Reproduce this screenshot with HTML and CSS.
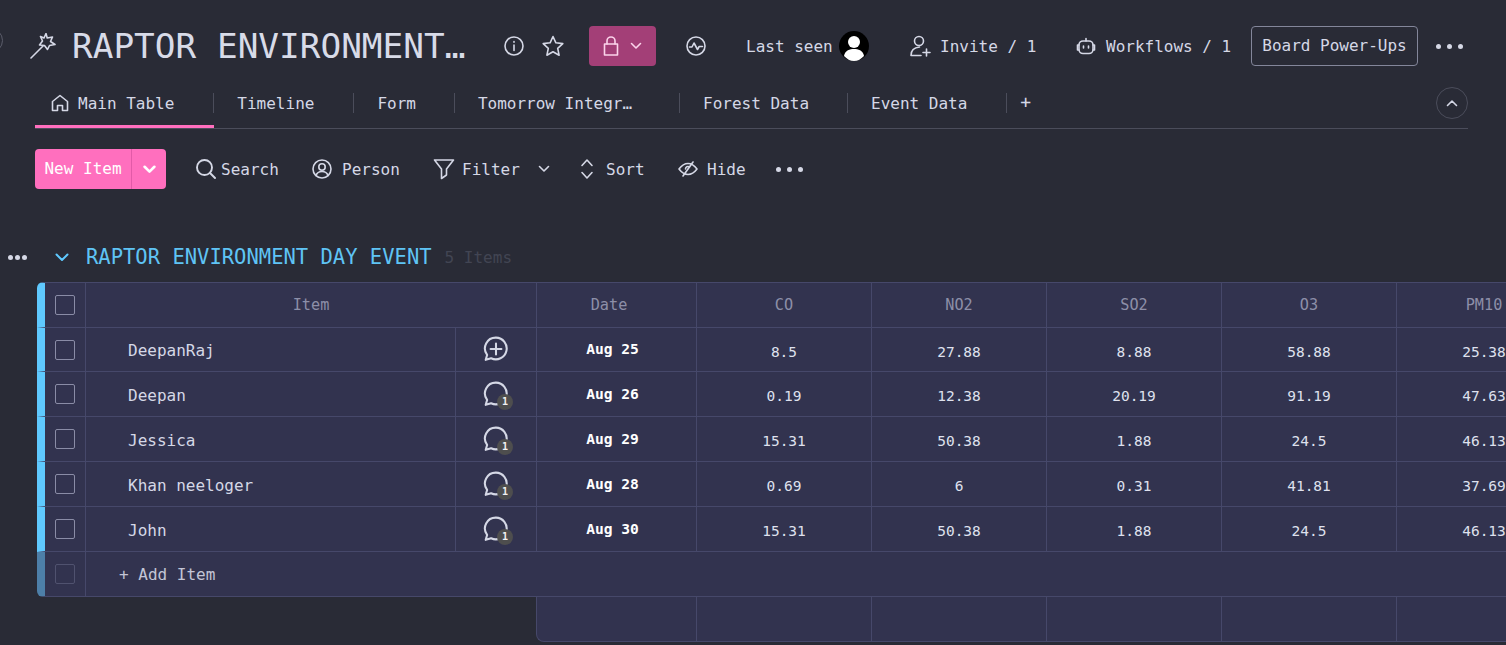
FILE: index.html
```html
<!DOCTYPE html>
<html lang="en">
<head>
<meta charset="utf-8">
<title>RAPTOR ENVIRONMENT DAY EVENT</title>
<link rel="stylesheet" href="styles.css">
</head>
<body>
<div class="edge-circle"></div>
<header class="topbar">
  <svg class="ic wand" viewBox="0 0 26 26"><path d="M1 25 13 13"/><path d="M16 1.500 17.200 6 22.500 5 20.500 9.500 25 12.500 19.500 13.500 17.500 17.500 14.500 13.500 9.500 13 12.500 9 10.500 4.500 14 6z" transform="translate(0 -1)"/></svg>
  <h1 class="title">RAPTOR ENVIRONMENT…</h1>
  <svg class="ic i20 info" viewBox="0 0 20 20"><circle cx="10" cy="10" r="9"/><path d="M10 9v5.500M10 5.500v.8"/></svg>
  <svg class="ic i22 star" viewBox="0 0 22 22"><path d="M11 1.500 13.900 7.800 20.800 8.600 15.700 13.300 17.100 20.200 11 16.700 4.900 20.200 6.300 13.300 1.200 8.600 8.100 7.800z"/></svg>
  <button class="lock">
    <svg class="ic lock-ic" viewBox="0 0 16 20"><rect x="1.500" y="8" width="13" height="11"/><path d="M4 8V5a4 4 0 0 1 8 0v3"/></svg>
    <svg class="ic chev12" viewBox="0 0 12 8"><path d="M1.500 1.500 6 6l4.500-4.500"/></svg>
  </button>
  <svg class="ic i20 pulse" viewBox="0 0 20 20"><circle cx="10" cy="10" r="9"/><path d="M3.500 11h2.500l2-4 3.500 6.500 1.700-3h3.300"/></svg>
  <span class="last-seen">Last seen</span>
  <svg class="avatar" viewBox="0 0 30 30"><circle cx="15" cy="15" r="15" fill="#000"/><circle cx="15" cy="11" r="6" fill="#fff"/><path d="M5 25c1-6 6-7 10-7s9 1 10 7c-3 3-6 5-10 5s-7-2-10-5z" fill="#fff"/></svg>
  <svg class="ic invite-ic" viewBox="0 0 22 22"><circle cx="10" cy="6" r="4.500"/><path d="M2 20.500c0-5 3-8 8.500-8.500M2 20.500h10M14 17.500h7M17.500 14v7"/></svg>
  <span class="invite">Invite / 1</span>
  <svg class="ic robot-ic" viewBox="0 0 20 18"><rect x="3" y="4" width="14" height="12.500" rx="4"/><path d="M3 8H1.500v5H3M17 8h1.500v5H17M10 4V1.500M7.500 9v2M12.500 9v2"/></svg>
  <span class="workflows">Workflows / 1</span>
  <button class="powerups">Board Power-Ups</button>
  <span class="dots top-dots"><i></i><i></i><i></i></span>
</header>

<nav class="tabs">
  <a class="tab tab-main"><svg class="ic home" viewBox="0 0 18 18"><path d="M1.500 7.500 9 1.500l7.500 6v9h-5v-5h-5v5h-5z"/></svg>Main Table</a>
  <a class="tab">Timeline</a>
  <a class="tab tab-tight">Form</a>
  <a class="tab tab-long">Tomorrow Integr…</a>
  <a class="tab tab-tight">Forest Data</a>
  <a class="tab">Event Data</a>
  <span class="tab-add">+</span>
  <span class="collapse"><svg class="ic chev12" viewBox="0 0 12 8"><path d="M1.500 6.500 6 2l4.500 4.500"/></svg></span>
</nav>

<section class="toolbar">
  <div class="new-item"><span class="new-label">New Item</span><span class="new-arrow"><svg viewBox="0 0 12 8"><path d="M1.500 1.500 6 6l4.500-4.500"/></svg></span></div>
  <svg class="ic search-ic" viewBox="0 0 20 20"><circle cx="8.500" cy="8.500" r="7.500"/><path d="M14 14l5 5"/></svg>
  <span class="tool search-t">Search</span>
  <svg class="ic person-ic" viewBox="0 0 20 20"><circle cx="10" cy="10" r="9"/><circle cx="10" cy="8" r="3.200"/><path d="M4 16.500c1-3 3.500-4 6-4s5 1 6 4"/></svg>
  <span class="tool person-t">Person</span>
  <svg class="ic filter-ic" viewBox="0 0 22 22"><path d="M1.500 2h19l-7 9v6l-5 3.500V11z"/></svg>
  <span class="tool filter-t">Filter</span>
  <svg class="ic chev12 filter-chev" viewBox="0 0 12 8"><path d="M1.500 1.500 6 6l4.500-4.500"/></svg>
  <svg class="ic sort-ic" viewBox="0 0 14 22"><path d="M2 7.500 7 2l5 5.500M2 14.500 7 20l5-5.500"/></svg>
  <span class="tool sort-t">Sort</span>
  <svg class="ic hide-ic" viewBox="0 0 20 16"><path d="M1 8c3-4 6-5.500 9-5.500S16 4 19 8c-3 4-6 5.500-9 5.500S4 12 1 8z"/><path d="M15 1 5 15"/><path d="M7.500 8a2.500 2.500 0 0 1 4-2"/></svg>
  <span class="tool hide-t">Hide</span>
  <span class="dots tool-dots"><i></i><i></i><i></i></span>
</section>

<section class="group-head">
  <span class="dots group-dots"><i></i><i></i><i></i></span>
  <svg class="ic group-chev" viewBox="0 0 14 9"><path d="M1.500 1.500 7 7l5.500-5.500"/></svg>
  <h2 class="group-title">RAPTOR ENVIRONMENT DAY EVENT</h2>
  <span class="group-count">5 Items</span>
</section>

<section class="board">
  <div class="row head">
    <div class="c chk"><span class="box"></span></div>
    <div class="c item-head">Item</div>
    <div class="c date-head">Date</div><div class="c">CO</div><div class="c">NO2</div><div class="c">SO2</div><div class="c">O3</div><div class="c">PM10</div>
  </div>
  <div class="row row-first">
    <div class="c chk"><span class="box"></span></div>
    <div class="c name">DeepanRaj</div>
    <div class="c cmt"><svg class="ic bubble bubble-add" viewBox="0 0 24 24"><path d="M12 1.500a10 10 0 1 1-4.500 19l-5 1.500 1.300-4.500A10 10 0 0 1 12 1.500z"/><path d="M12 7v10M7 12h10"/></svg></div>
    <div class="c date">Aug 25</div><div class="c val">8.5</div><div class="c val">27.88</div><div class="c val">8.88</div><div class="c val">58.88</div><div class="c val">25.38</div>
  </div>
  <div class="row">
    <div class="c chk"><span class="box"></span></div>
    <div class="c name">Deepan</div>
    <div class="c cmt"><span class="bubble-wrap"><svg class="ic bubble" viewBox="0 0 24 24"><path d="M12 1.500a10 10 0 1 1-4.500 19l-5 1.500 1.300-4.500A10 10 0 0 1 12 1.500z"/></svg><b class="badge">1</b></span></div>
    <div class="c date">Aug 26</div><div class="c val">0.19</div><div class="c val">12.38</div><div class="c val">20.19</div><div class="c val">91.19</div><div class="c val">47.63</div>
  </div>
  <div class="row">
    <div class="c chk"><span class="box"></span></div>
    <div class="c name">Jessica</div>
    <div class="c cmt"><span class="bubble-wrap"><svg class="ic bubble" viewBox="0 0 24 24"><path d="M12 1.500a10 10 0 1 1-4.500 19l-5 1.500 1.300-4.500A10 10 0 0 1 12 1.500z"/></svg><b class="badge">1</b></span></div>
    <div class="c date">Aug 29</div><div class="c val">15.31</div><div class="c val">50.38</div><div class="c val">1.88</div><div class="c val">24.5</div><div class="c val">46.13</div>
  </div>
  <div class="row">
    <div class="c chk"><span class="box"></span></div>
    <div class="c name">Khan neeloger</div>
    <div class="c cmt"><span class="bubble-wrap"><svg class="ic bubble" viewBox="0 0 24 24"><path d="M12 1.500a10 10 0 1 1-4.500 19l-5 1.500 1.300-4.500A10 10 0 0 1 12 1.500z"/></svg><b class="badge">1</b></span></div>
    <div class="c date">Aug 28</div><div class="c val">0.69</div><div class="c val">6</div><div class="c val">0.31</div><div class="c val">41.81</div><div class="c val">37.69</div>
  </div>
  <div class="row">
    <div class="c chk"><span class="box"></span></div>
    <div class="c name">John</div>
    <div class="c cmt"><span class="bubble-wrap"><svg class="ic bubble" viewBox="0 0 24 24"><path d="M12 1.500a10 10 0 1 1-4.500 19l-5 1.500 1.300-4.500A10 10 0 0 1 12 1.500z"/></svg><b class="badge">1</b></span></div>
    <div class="c date">Aug 30</div><div class="c val">15.31</div><div class="c val">50.38</div><div class="c val">1.88</div><div class="c val">24.5</div><div class="c val">46.13</div>
  </div>
  <div class="row add">
    <div class="c chk"><span class="box box-dim"></span></div>
    <div class="c add-label">+ Add Item</div>
  </div>
  <div class="summary">
    <div class="c"></div><div class="c"></div><div class="c"></div><div class="c"></div><div class="c"></div><div class="c"></div>
  </div>
</section>
</body>
</html>
```

FILE: styles.css
```css
* { box-sizing: border-box; }
html, body { height: 100%; }
body {
  margin: 0;
  width: 1506px;
  height: 645px;
  overflow: hidden;
  position: relative;
  background: #292b36;
  color: #d5d8e6;
  font-family: "DejaVu Sans Mono", "Liberation Mono", monospace;
  font-size: 16px;
}
button { font: inherit; color: inherit; }
.ic { fill: none; stroke: #d5d8e6; stroke-width: 1.6; stroke-linecap: round; stroke-linejoin: round; flex: none; display: block; }
.i20 { width: 20px; height: 20px; }
.i22 { width: 22px; height: 22px; }
.chev12 { width: 12px; height: 8px; }

.edge-circle { position: absolute; left: -22px; top: 28px; width: 25px; height: 25px; border-radius: 50%; border: 1px solid #5b5d6b; }

/* top bar */
.topbar { display: flex; align-items: center; height: 40px; margin-top: 26px; padding-left: 30px; }
.wand { width: 26px; height: 26px; }
.title { margin: 0 0 0 16px; width: 432px; font-size: 34.400px; font-weight: 400; white-space: nowrap; overflow: hidden; line-height: 40px; color: #d8dbe8; }
.star { margin-left: 18px; }
.lock { margin-left: 25px; width: 67px; height: 40px; border: 0; border-radius: 4px; background: #a33f77; display: flex; align-items: center; justify-content: center; gap: 11px; padding: 0; }
.lock-ic { width: 16px; height: 20px; stroke: #fbd3ea; }
.lock .chev12 { stroke: #fbd3ea; }
.pulse { margin-left: 30px; }
.last-seen { margin-left: 40px; width: 93px; white-space: nowrap; }
.avatar { width: 30px; height: 30px; display: block; flex: none; }
.invite-ic { width: 22px; height: 22px; margin-left: 40px; }
.invite { margin-left: 9px; width: 136px; white-space: nowrap; }
.robot-ic { width: 20px; height: 18px; }
.workflows { margin-left: 10px; width: 145px; white-space: nowrap; }
.powerups { width: 167px; height: 40px; padding: 0 0 2px; background: transparent; border: 1px solid #83869a; border-radius: 4px; white-space: nowrap; }
.dots { display: inline-flex; gap: 6px; align-items: center; flex: none; }
.dots i { display: block; width: 5px; height: 5px; border-radius: 50%; background: #d5d8e6; }
.top-dots { margin-left: 18px; }

/* tabs */
.tabs { display: flex; align-items: center; height: 49px; margin: 14px 0 0 35px; padding-bottom: 2px; width: 1433px; border-bottom: 1px solid #4b4d5b; }
.tab { display: flex; align-items: center; height: 20px; padding: 0 39px 0 23px; white-space: nowrap; border-right: 1px solid #4b4d5b; }
.tab-main { position: relative; padding: 0 39px 0 16px; gap: 9px; }
.tab-main::after { content: ""; position: absolute; left: 0; right: -1px; bottom: -15px; height: 3px; background: #ff6fbe; }
.tab-tight { padding-right: 38px; }
.tab-long { padding-right: 47px; }
.home { width: 18px; height: 18px; }
.tab-add { margin-left: 13px; font-size: 18px; line-height: 18px; margin-top: -2px; }
.collapse { margin-left: auto; width: 32px; height: 32px; border: 1px solid #4b4d5b; border-radius: 50%; display: flex; align-items: center; justify-content: center; }

/* toolbar */
.toolbar { display: flex; align-items: center; height: 40px; margin: 20px 0 0 35px; }
.new-item { display: flex; width: 131px; height: 40px; background: #ff6fbe; border-radius: 4px; color: #fff; }
.new-label { width: 97px; line-height: 40px; text-align: center; border-right: 1px solid #e25aa8; white-space: nowrap; }
.new-arrow { flex: 1; display: flex; align-items: center; justify-content: center; }
.new-arrow svg { width: 13px; height: 9px; fill: none; stroke: #fff; stroke-width: 2.4; stroke-linecap: round; stroke-linejoin: round; }
.tool { white-space: nowrap; }
.search-ic { width: 20px; height: 20px; margin-left: 30px; stroke-width: 1.900; }
.search-t { margin-left: 5px; width: 58px; }
.person-ic { width: 20px; height: 20px; margin-left: 33px; }
.person-t { margin-left: 10px; width: 58px; }
.filter-ic { width: 22px; height: 22px; margin-left: 33px; }
.filter-t { margin-left: 7px; width: 58px; }
.filter-chev { margin-left: 18px; }
.sort-ic { width: 14px; height: 22px; margin-left: 30px; }
.sort-t { margin-left: 12px; width: 39px; }
.hide-ic { width: 20px; height: 16px; margin-left: 33px; }
.hide-t { margin-left: 9px; width: 39px; }
.tool-dots { margin-left: 30px; }

/* group header */
.group-head { display: flex; align-items: center; height: 30px; margin: 53px 0 0 8px; }
.group-dots { gap: 2px; }
.group-chev { width: 14px; height: 9px; margin-left: 28px; stroke: #5fc9ff; stroke-width: 2; }
.group-title { margin: 0 0 0 17px; font-size: 20.500px; font-weight: 400; color: #5fc4f5; white-space: nowrap; line-height: 30px; }
.group-count { margin-left: 13px; color: #424553; white-space: nowrap; }

/* table */
.board { margin: 10px 0 0 37px; width: 1469px; overflow: hidden; }
.row {
  display: grid;
  grid-template-columns: 41px 370px 81px 160px 175px 175px 175px 175px 175px;
  height: 45px;
  background: #32334f;
  border-left: 8px solid #5fc9ff;
  border-bottom: 1px solid #46486a;
}
.c { display: flex; align-items: center; justify-content: center; border-right: 1px solid #46486a; min-width: 0; }
.chk { justify-content: flex-start; padding-left: 10px; }
.box { display: block; width: 20px; height: 20px; border: 1px solid #8a8ca6; border-radius: 2px; }
.box-dim { border-color: #50526f; }

.head { height: 46px; border-top: 1px solid #46486a; border-top-left-radius: 6px; color: #8d8fa8; font-size: 15.200px; }
.row-first { height: 44px; }
.item-head { grid-column: span 2; }
.date-head { padding-right: 15px; }
.name { justify-content: flex-start; padding: 2px 0 0 42px; white-space: nowrap; }
.bubble { width: 26px; height: 26px; stroke-width: 1.900; }
.bubble-add { margin-bottom: 2px; }
.bubble-wrap { position: relative; display: block; width: 26px; height: 26px; }
.badge { position: absolute; right: -4px; bottom: -3px; width: 16px; height: 16px; border-radius: 50%; background: #4e4e4e; color: #f2f2f2; font-size: 10px; line-height: 16px; text-align: center; font-weight: 700; }
.date { color: #fff; font-weight: 700; font-size: 14.600px; padding: 0 8px 2px 0; }
.val { color: #dfe1ee; font-size: 14.500px; padding-top: 4px; }

.add { display: flex; border-left-color: #4d7fa8; border-bottom-left-radius: 6px; }
.add .chk { width: 41px; }
.add-label { border-right: 0; justify-content: flex-start; padding-left: 33px; color: #c3c5d6; }

.summary {
  display: grid;
  grid-template-columns: 160px 175px 175px 175px 175px 175px;
  margin-left: 499px;
  height: 45px;
  background: #32334f;
  border-left: 1px solid #46486a;
  border-bottom: 1px solid #46486a;
  border-bottom-left-radius: 8px;
}
```
